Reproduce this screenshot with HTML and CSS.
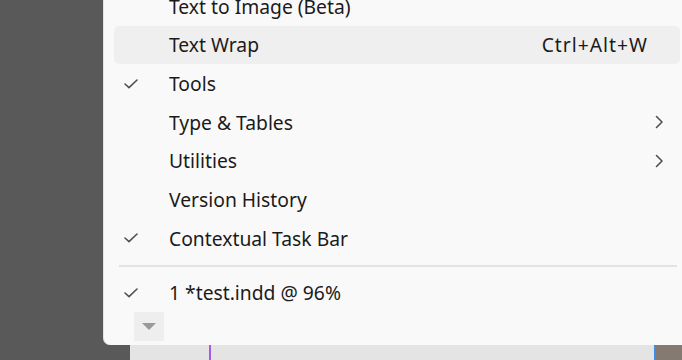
FILE: index.html
```html
<!DOCTYPE html>
<html lang="en">
<head>
  <meta charset="UTF-8">
  <meta name="viewport" content="width=device-width, initial-scale=1">
  <title>Window menu</title>
  <link rel="stylesheet" href="styles.css">
</head>
<body>
  <div class="app">
    <div class="pasteboard"></div>
    <div class="document">
      <div class="guide"></div>
    </div>
    <div class="panel"></div>
  </div>

  <div class="menu">
    <div class="item">
      <span class="check"></span>
      <span class="label">Text to Image (Beta)</span>
    </div>
    <div class="item active">
      <span class="check"></span>
      <span class="label">Text Wrap</span>
      <span class="shortcut">Ctrl+Alt+W</span>
    </div>
    <div class="item">
      <span class="check"><svg width="14" height="10" viewBox="0 0 14 10"><path d="M1 5 L5 8.6 L13 1" /></svg></span>
      <span class="label">Tools</span>
    </div>
    <div class="item">
      <span class="check"></span>
      <span class="label">Type &amp; Tables</span>
      <span class="arrow"><svg width="9" height="14" viewBox="0 0 9 14"><path d="M1.5 1.5 L7 7 L1.5 12.5" /></svg></span>
    </div>
    <div class="item">
      <span class="check"></span>
      <span class="label">Utilities</span>
      <span class="arrow"><svg width="9" height="14" viewBox="0 0 9 14"><path d="M1.5 1.5 L7 7 L1.5 12.5" /></svg></span>
    </div>
    <div class="item">
      <span class="check"></span>
      <span class="label">Version History</span>
    </div>
    <div class="item">
      <span class="check"><svg width="14" height="10" viewBox="0 0 14 10"><path d="M1 5 L5 8.6 L13 1" /></svg></span>
      <span class="label">Contextual Task Bar</span>
    </div>

    <div class="separator"></div>

    <div class="item">
      <span class="check"><svg width="14" height="10" viewBox="0 0 14 10"><path d="M1 5 L5 8.6 L13 1" /></svg></span>
      <span class="label">1 *test.indd @ 96%</span>
    </div>

    <div class="more">
      <span class="more-btn"><span class="tri"></span></span>
    </div>
  </div>
</body>
</html>
```

FILE: styles.css
```css
body {
  margin: 0;
  width: 682px;
  height: 360px;
  overflow: hidden;
  position: relative;
  background-color: #595959;
  font-family: "Noto Sans", "Open Sans", sans-serif;
  color: #1b1b1b;
}

.app {
  display: flex;
  height: 100%;
}

.pasteboard {
  width: 130px;
  flex-shrink: 0;
  background-color: #595959;
}

.document {
  width: 524px;
  flex-shrink: 0;
  box-sizing: border-box;
  background-color: #e4e4e4;
  display: flex;
  padding-left: 79px;
}

.guide {
  width: 2px;
  background-color: #a45ce6;
}

.panel {
  flex: 1;
  border-left: 2px solid #3b8de8;
  background-color: #857a72;
}

/* menu sits over the app window */
.menu {
  position: absolute;
  left: 103px;
  top: -13px;
  width: 566px;
  height: 358px;
  padding: 0 10px;
  background-color: #f9f9f9;
  border-left: 1px solid #e2e2e2;
  border-radius: 0 0 0 7px;
  box-sizing: content-box;
}

.item {
  display: flex;
  align-items: center;
  height: 38.67px;
  border-radius: 5px;
  font-size: 19.3px;
}

.item.active {
  background-color: #efefef;
}

.check {
  width: 55px;
  padding-left: 10px;
  box-sizing: border-box;
  display: flex;
  align-items: center;
}

.check svg path,
.arrow svg path {
  fill: none;
  stroke: #505050;
  stroke-width: 1.6;
  stroke-linecap: round;
  stroke-linejoin: round;
}

.label {
  flex: 1;
}

.shortcut {
  margin-right: 32px;
  letter-spacing: 1px;
}

.arrow {
  margin-right: 16px;
  display: flex;
}

.separator {
  height: 2px;
  background-color: #e3e3e3;
  margin: 7px 3px 7px 5px;
}

.more {
  padding-left: 20px;
}

.more-btn {
  width: 30px;
  height: 29px;
  background-color: #eeeeee;
  display: flex;
  align-items: center;
  justify-content: center;
}

.tri {
  width: 0;
  height: 0;
  border-left: 7px solid transparent;
  border-right: 7px solid transparent;
  border-top: 7px solid #9a9a9a;
}
```
